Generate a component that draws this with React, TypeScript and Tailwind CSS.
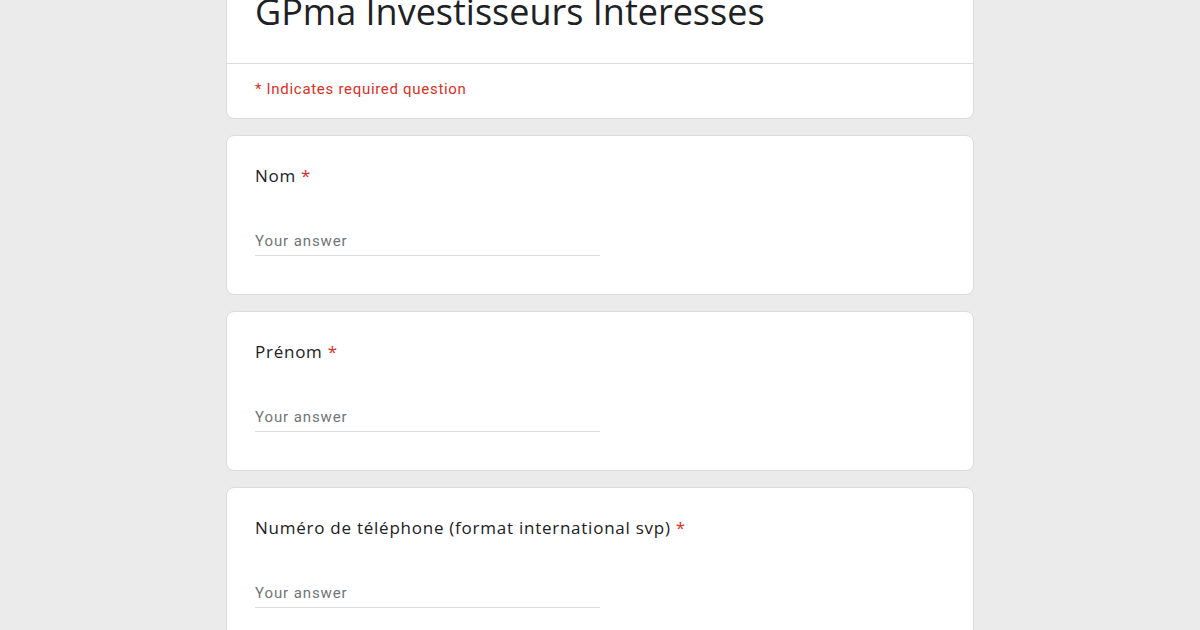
import React from 'react';

const questions = [
  { label: 'Nom' },
  { label: 'Prénom' },
  { label: 'Numéro de téléphone (format international svp)' },
];

const QuestionCard: React.FC<{ label: string }> = ({ label }) => (
  <div className="bg-white border border-[#dadce0] rounded-lg px-[28px] pt-[28px] pb-[38px]">
    <div className="text-[17px] leading-[24px] text-[#202124] tracking-[0.75px] font-['Open_Sans',sans-serif]">
      {label}
      <span className="text-[#d93025] ml-[5px]">*</span>
    </div>
    <div className="mt-[40px] w-[345px] border-b border-[#dadce0] pb-[2px]">
      <span className="text-[15px] leading-[24px] tracking-[0.9px] text-[#70757a] font-['Roboto',sans-serif]">
        Your answer
      </span>
    </div>
  </div>
);

export default function App() {
  return (
    <div className="w-[1200px] h-[630px] overflow-hidden bg-[#ebebeb]">
      <div className="w-[748px] mx-auto -mt-[40px] flex flex-col gap-[16px]">
        {/* Header card */}
        <div className="bg-white border border-[#dadce0] rounded-lg">
          <div className="px-[28px] pt-[29px] pb-[29px] text-[36px] leading-[44px] text-[#202124] font-['Open_Sans',sans-serif]">
            GPma Investisseurs Interesses
          </div>
          <div className="border-t border-[#dadce0] px-[28px] pt-[15px] pb-[19px] text-[15px] leading-[20px] tracking-[0.7px] text-[#d93025] font-['Roboto',sans-serif]">
            * Indicates required question
          </div>
        </div>

        {questions.map((q) => (
          <QuestionCard key={q.label} label={q.label} />
        ))}
      </div>
    </div>
  );
}
